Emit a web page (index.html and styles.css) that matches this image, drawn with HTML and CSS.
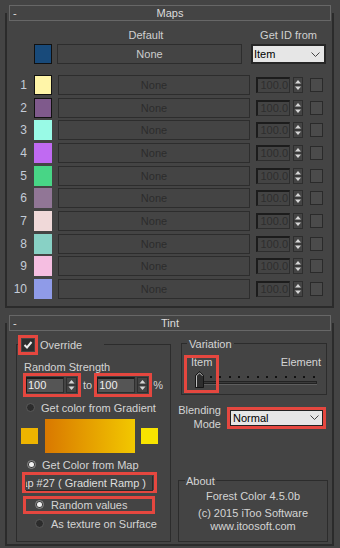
FILE: index.html
```html
<!DOCTYPE html>
<html lang="en">
<head>
    <meta charset="UTF-8">
    <meta name="viewport" content="width=device-width, initial-scale=1.0">
    <title>Forest Color</title>
    <link rel="stylesheet" href="styles.css">
</head>
<body>
    <div class="panel">

        <!-- Maps rollout -->
        <div class="rollout">
            <div class="rollout-title"><span class="collapse">-</span><span class="title-text">Maps</span><span></span></div>
            <div class="maps">
                <div class="maps-head">
                    <span class="head-default">Default</span>
                    <span class="head-id">Get ID from</span>
                </div>
                <div class="default-row">
                    <span class="swatch framed sw-default"></span>
                    <div class="map-btn default-btn">None</div>
                    <div class="dropdown id-drop">
                        <span>Item</span>
                        <svg width="9" height="5" viewBox="0 0 9 5"><polyline points="0.5,0.5 4.5,4.5 8.5,0.5" fill="none" stroke="#444" stroke-width="1"/></svg>
                    </div>
                </div>
                <div class="map-rows">
                    <div class="map-row">
                        <span class="num">1</span><span class="swatch framed sw-1"></span>
                        <div class="map-btn">None</div>
                        <div class="spinner"><span class="spin-field">100.0</span><span class="spin-arrows"><svg width="8" height="14" viewBox="0 0 8 14"><polygon points="1,5.5 4,2 7,5.5" fill="#d6d6d6"/><rect x="0" y="6.5" width="8" height="1" fill="#2e2e2e"/><polygon points="1,8.5 4,12 7,8.5" fill="#d6d6d6"/></svg></span></div>
                        <span class="check"></span>
                    </div>
                    <div class="map-row">
                        <span class="num">2</span><span class="swatch framed sw-2"></span>
                        <div class="map-btn">None</div>
                        <div class="spinner"><span class="spin-field">100.0</span><span class="spin-arrows"><svg width="8" height="14" viewBox="0 0 8 14"><polygon points="1,5.5 4,2 7,5.5" fill="#d6d6d6"/><rect x="0" y="6.5" width="8" height="1" fill="#2e2e2e"/><polygon points="1,8.5 4,12 7,8.5" fill="#d6d6d6"/></svg></span></div>
                        <span class="check"></span>
                    </div>
                    <div class="map-row">
                        <span class="num">3</span><span class="swatch sw-3"></span>
                        <div class="map-btn">None</div>
                        <div class="spinner"><span class="spin-field">100.0</span><span class="spin-arrows"><svg width="8" height="14" viewBox="0 0 8 14"><polygon points="1,5.5 4,2 7,5.5" fill="#d6d6d6"/><rect x="0" y="6.5" width="8" height="1" fill="#2e2e2e"/><polygon points="1,8.5 4,12 7,8.5" fill="#d6d6d6"/></svg></span></div>
                        <span class="check"></span>
                    </div>
                    <div class="map-row">
                        <span class="num">4</span><span class="swatch sw-4"></span>
                        <div class="map-btn">None</div>
                        <div class="spinner"><span class="spin-field">100.0</span><span class="spin-arrows"><svg width="8" height="14" viewBox="0 0 8 14"><polygon points="1,5.5 4,2 7,5.5" fill="#d6d6d6"/><rect x="0" y="6.5" width="8" height="1" fill="#2e2e2e"/><polygon points="1,8.5 4,12 7,8.5" fill="#d6d6d6"/></svg></span></div>
                        <span class="check"></span>
                    </div>
                    <div class="map-row">
                        <span class="num">5</span><span class="swatch sw-5"></span>
                        <div class="map-btn">None</div>
                        <div class="spinner"><span class="spin-field">100.0</span><span class="spin-arrows"><svg width="8" height="14" viewBox="0 0 8 14"><polygon points="1,5.5 4,2 7,5.5" fill="#d6d6d6"/><rect x="0" y="6.5" width="8" height="1" fill="#2e2e2e"/><polygon points="1,8.5 4,12 7,8.5" fill="#d6d6d6"/></svg></span></div>
                        <span class="check"></span>
                    </div>
                    <div class="map-row">
                        <span class="num">6</span><span class="swatch sw-6"></span>
                        <div class="map-btn">None</div>
                        <div class="spinner"><span class="spin-field">100.0</span><span class="spin-arrows"><svg width="8" height="14" viewBox="0 0 8 14"><polygon points="1,5.5 4,2 7,5.5" fill="#d6d6d6"/><rect x="0" y="6.5" width="8" height="1" fill="#2e2e2e"/><polygon points="1,8.5 4,12 7,8.5" fill="#d6d6d6"/></svg></span></div>
                        <span class="check"></span>
                    </div>
                    <div class="map-row">
                        <span class="num">7</span><span class="swatch sw-7"></span>
                        <div class="map-btn">None</div>
                        <div class="spinner"><span class="spin-field">100.0</span><span class="spin-arrows"><svg width="8" height="14" viewBox="0 0 8 14"><polygon points="1,5.5 4,2 7,5.5" fill="#d6d6d6"/><rect x="0" y="6.5" width="8" height="1" fill="#2e2e2e"/><polygon points="1,8.5 4,12 7,8.5" fill="#d6d6d6"/></svg></span></div>
                        <span class="check"></span>
                    </div>
                    <div class="map-row">
                        <span class="num">8</span><span class="swatch sw-8"></span>
                        <div class="map-btn">None</div>
                        <div class="spinner"><span class="spin-field">100.0</span><span class="spin-arrows"><svg width="8" height="14" viewBox="0 0 8 14"><polygon points="1,5.5 4,2 7,5.5" fill="#d6d6d6"/><rect x="0" y="6.5" width="8" height="1" fill="#2e2e2e"/><polygon points="1,8.5 4,12 7,8.5" fill="#d6d6d6"/></svg></span></div>
                        <span class="check"></span>
                    </div>
                    <div class="map-row">
                        <span class="num">9</span><span class="swatch sw-9"></span>
                        <div class="map-btn">None</div>
                        <div class="spinner"><span class="spin-field">100.0</span><span class="spin-arrows"><svg width="8" height="14" viewBox="0 0 8 14"><polygon points="1,5.5 4,2 7,5.5" fill="#d6d6d6"/><rect x="0" y="6.5" width="8" height="1" fill="#2e2e2e"/><polygon points="1,8.5 4,12 7,8.5" fill="#d6d6d6"/></svg></span></div>
                        <span class="check"></span>
                    </div>
                    <div class="map-row">
                        <span class="num">10</span><span class="swatch sw-10"></span>
                        <div class="map-btn">None</div>
                        <div class="spinner"><span class="spin-field">100.0</span><span class="spin-arrows"><svg width="8" height="14" viewBox="0 0 8 14"><polygon points="1,5.5 4,2 7,5.5" fill="#d6d6d6"/><rect x="0" y="6.5" width="8" height="1" fill="#2e2e2e"/><polygon points="1,8.5 4,12 7,8.5" fill="#d6d6d6"/></svg></span></div>
                        <span class="check"></span>
                    </div>
                </div>
            </div>
        </div>

        <!-- Tint rollout -->
        <div class="rollout tint-rollout">
            <div class="rollout-title"><span class="collapse">-</span><span class="title-text">Tint</span><span></span></div>
            <div class="tint">
                <fieldset class="group override-group">
                    <legend class="override-legend">
                        <span class="hl hl-check"><span class="checkbox on"><svg width="12" height="12" viewBox="0 0 12 12"><polyline points="2.5,6 5,8.5 9.5,3" fill="none" stroke="#ececec" stroke-width="2"/></svg></span></span>
                        <span class="override-text">Override</span>
                    </legend>
                    <div class="ovr-body">
                        <div class="rs-label">Random Strength</div>
                        <div class="rs-row">
                            <div class="hl hl-spin">
                                <span class="spin-field on">100</span>
                                <span class="spin-arrows big"><svg width="9" height="14" viewBox="0 0 9 14"><polygon points="1.5,5.5 4.5,2 7.5,5.5" fill="#d6d6d6"/><rect x="0" y="6.5" width="9" height="1" fill="#2e2e2e"/><polygon points="1.5,8.5 4.5,12 7.5,8.5" fill="#d6d6d6"/></svg></span>
                            </div>
                            <span class="to">to</span>
                            <div class="hl hl-spin">
                                <span class="spin-field on">100</span>
                                <span class="spin-arrows big"><svg width="9" height="14" viewBox="0 0 9 14"><polygon points="1.5,5.5 4.5,2 7.5,5.5" fill="#d6d6d6"/><rect x="0" y="6.5" width="9" height="1" fill="#2e2e2e"/><polygon points="1.5,8.5 4.5,12 7.5,8.5" fill="#d6d6d6"/></svg></span>
                            </div>
                            <span class="pct">%</span>
                        </div>
                        <div class="radio-line grad-radio"><span class="radio"></span>Get color from Gradient</div>
                        <div class="grad-row">
                            <span class="grad-swatch grad-start"></span>
                            <span class="gradient"></span>
                            <span class="grad-swatch grad-end"></span>
                        </div>
                        <div class="radio-line map-radio"><span class="radio on"></span>Get Color from Map</div>
                        <div class="hl hl-map"><div class="tex-btn">Map #27 ( Gradient Ramp )</div></div>
                        <div class="hl hl-random"><div class="radio-line"><span class="radio on"></span>Random values</div></div>
                        <div class="radio-line surface-radio"><span class="radio"></span>As texture on Surface</div>
                    </div>
                </fieldset>

                <div class="right-col">
                    <fieldset class="group var-group">
                        <legend class="group-legend">Variation</legend>
                        <div class="var-body">
                            <div class="var-labels"><span>Item</span><span>Element</span></div>
                            <svg class="slider" width="125" height="18" viewBox="0 0 125 18">
                                <g fill="#111">
                                    <rect x="15" y="6" width="2" height="2"/><rect x="24" y="6" width="2" height="2"/>
                                    <rect x="34" y="6" width="2" height="2"/><rect x="43" y="6" width="2" height="2"/>
                                    <rect x="52" y="6" width="2" height="2"/><rect x="62" y="6" width="2" height="2"/>
                                    <rect x="71" y="6" width="2" height="2"/><rect x="80" y="6" width="2" height="2"/>
                                    <rect x="90" y="6" width="2" height="2"/><rect x="99" y="6" width="2" height="2"/>
                                    <rect x="108" y="6" width="2" height="2"/><rect x="118" y="6" width="2" height="2"/>
                                </g>
                                <rect x="8.5" y="11.5" width="113" height="2" fill="#3a3a3a" stroke="#222"/>
                                <line x1="9" y1="14.5" x2="122" y2="14.5" stroke="#5e5e5e"/>
                                <polygon points="0.5,17.5 8.5,17.5 8.5,5.5 4.5,1.5 0.5,5.5" fill="#2e2e2e" stroke="#151515"/>
                                <polyline points="1.5,17 1.5,5.8 4.5,2.8 7.5,5.8" fill="none" stroke="#bdbdbd"/>
                            </svg>
                            <span class="hl hl-slider"></span>
                        </div>
                    </fieldset>

                    <div class="blend-row">
                        <div class="blend-label">Blending<br>Mode</div>
                        <div class="hl hl-blend">
                            <div class="dropdown blend-drop">
                                <span>Normal</span>
                                <svg width="9" height="5" viewBox="0 0 9 5"><polyline points="0.5,0.5 4.5,4.5 8.5,0.5" fill="none" stroke="#444" stroke-width="1"/></svg>
                            </div>
                        </div>
                    </div>

                    <fieldset class="group about-group">
                        <legend class="group-legend about-legend">About</legend>
                        <div class="about-body">
                            <div class="about-version">Forest Color 4.5.0b</div>
                            <div class="about-line">(c) 2015 iToo Software</div>
                            <div class="about-line">www.itoosoft.com</div>
                        </div>
                    </fieldset>
                </div>
            </div>
        </div>
    </div>
</body>
</html>
```

FILE: styles.css
```css
body {
    margin: 0;
    background-color: #444444;
    font-family: "Liberation Sans", Arial, sans-serif;
    font-size: 11px;
    line-height: 14px;
    color: #d4d4d4;
}

.panel {
    width: 340px;
    height: 548px;
    padding: 0 6px 0 5px;
    box-sizing: border-box;
    overflow: hidden;
}

/* rollouts */
.rollout {
    display: flow-root;
    margin-top: 13px;
    border: 2px solid #2b2b2b;
    border-top: none;
}

.tint-rollout {
    margin-top: 15px;
}

.rollout-title {
    display: grid;
    grid-template-columns: 1fr auto 1fr;
    height: 16px;
    box-sizing: border-box;
    margin: -8px 1px 0 2px;
    border: 1px solid #676767;
    color: #dcdcdc;
}

.collapse {
    padding-left: 3px;
}

/* maps */
.maps {
    padding-bottom: 7px;
}

.maps-head {
    display: flex;
    margin-top: 7px;
    color: #d0d0d0;
}

.head-default {
    width: 185px;
    margin-left: 50px;
    padding-right: 7px;
    box-sizing: border-box;
    text-align: center;
}

.head-id {
    width: 75px;
    margin-left: 9px;
    text-align: center;
}

.default-row {
    display: flex;
    align-items: center;
    height: 20px;
    margin-top: 2px;
}

.default-row .swatch {
    margin-left: 27px;
}

.map-rows {
    display: flex;
    flex-direction: column;
    gap: 2.667px;
    margin-top: 11px;
}

.map-row {
    display: flex;
    align-items: center;
    height: 20px;
}

.num {
    width: 20px;
    text-align: right;
    color: #c4ccd8;
    font-size: 12px;
}

.swatch {
    width: 18px;
    height: 20px;
    margin-left: 7px;
    box-sizing: border-box;
}

.swatch.framed {
    border: 1px solid #111;
}

.sw-default { background: #184a7a; }
.sw-1 { background: #fff5a8; }
.sw-2 { background: #7f5a8c; }
.sw-3 { background: #99fae6; }
.sw-4 { background: #c06af2; }
.sw-5 { background: #48d586; }
.sw-6 { background: #917696; }
.sw-7 { background: #f0d9d9; }
.sw-8 { background: #88d1c5; }
.sw-9 { background: #f5bee1; }
.sw-10 { background: #8f9be8; }

.map-btn {
    width: 192px;
    height: 20px;
    margin-left: 6px;
    box-sizing: border-box;
    border: 1px solid #2d2d2d;
    text-align: center;
    line-height: 18px;
    color: #2c2c2c;
}

.default-btn {
    width: 185px;
    margin-left: 5px;
    color: #cdcdcd;
}

.dropdown {
    display: flex;
    align-items: center;
    justify-content: space-between;
    box-sizing: border-box;
    background: #e6e6e6;
    color: #000;
}

.id-drop {
    width: 75px;
    height: 20px;
    margin-left: 9px;
    border: 2px solid #262626;
    padding: 0 4px 0 1px;
}

.spinner {
    display: flex;
    gap: 3px;
    margin-left: 6px;
}

.spin-field {
    width: 34px;
    height: 16px;
    box-sizing: border-box;
    border-top: 2px solid #1c1c1c;
    border-left: 2px solid #1c1c1c;
    border-right: 1px solid #2e2e2e;
    border-bottom: 1px solid #2e2e2e;
    padding-right: 1px;
    text-align: right;
    line-height: 13px;
    color: #2e2e2e;
}

.spin-arrows {
    display: flex;
    width: 10px;
    height: 16px;
    box-sizing: border-box;
    border: 1px solid #2e2e2e;
}

.check {
    width: 13px;
    height: 14px;
    margin-left: 7px;
    box-sizing: border-box;
    border: 1px solid #2a2a2a;
    background: #4b4b4b;
}

/* tint */
.tint {
    display: flex;
    align-items: flex-start;
    padding: 0 4px 2px 9px;
}

.group {
    margin: 0;
    padding: 0;
    min-width: 0;
    box-sizing: border-box;
    border: 1px solid #2c2c2c;
}

.override-group {
    width: 155px;
    margin-top: 4px;
}

.override-legend {
    display: flex;
    align-items: center;
    margin-left: 1px;
    padding: 0 22px 0 0;
}

.hl {
    box-sizing: border-box;
    border: 3px solid #e5473f;
}

.hl-check {
    display: flex;
    padding: 1px;
}

.checkbox {
    display: flex;
    width: 12px;
    height: 12px;
    background: #2e2e2e;
}

.override-text {
    margin-left: 2px;
}

.ovr-body {
    padding-bottom: 10px;
}

.rs-label {
    margin-top: 5px;
    padding-left: 7px;
}

.rs-row {
    display: flex;
    align-items: center;
    margin: -1px 0 0 6px;
}

.hl-spin {
    display: flex;
    gap: 2px;
    width: 58px;
    height: 24px;
    padding: 1px 1px 1px 0;
}

.spin-field.on {
    width: 38px;
    border-left-width: 1px;
    padding: 0 0 0 1px;
    text-align: left;
    background: #555;
    color: #f0f0f0;
}

.spin-arrows.big {
    width: 11px;
}

.to {
    margin: 0 2px;
}

.pct {
    margin-left: 1px;
}

.radio-line {
    display: flex;
    align-items: center;
    gap: 6px;
}

.radio {
    display: flex;
    align-items: center;
    justify-content: center;
    width: 9px;
    height: 9px;
    box-sizing: border-box;
    border-radius: 50%;
    border: 1px solid #5a5a5a;
    background: #2c2c2c;
}

.radio.on {
    border-color: #8c8c8c;
    background: #3a3a3a;
}

.radio.on::after {
    content: "";
    width: 5px;
    height: 5px;
    border-radius: 50%;
    background: #f2f2f2;
}

.grad-radio {
    margin-top: 4px;
    padding-left: 9px;
}

.grad-row {
    display: flex;
    align-items: center;
    margin-top: 4px;
    padding-left: 4px;
}

.grad-swatch {
    width: 17px;
    height: 16px;
}

.grad-start {
    background: #eeb400;
}

.grad-end {
    background: #f8e400;
}

.gradient {
    width: 90px;
    height: 34px;
    margin: 0 6px 0 7px;
    background: linear-gradient(to right, #d97800, #f2c800);
}

.map-radio {
    margin-top: 5px;
    padding-left: 10px;
}

.hl-map {
    width: 135px;
    height: 21px;
    margin-left: 5px;
    padding: 1px 1px 0 1px;
}

.tex-btn {
    display: flex;
    justify-content: flex-end;
    height: 14px;
    overflow: hidden;
    white-space: pre;
    padding-right: 6px;
    border-bottom: 1px solid #2a2a2a;
    border-right: 1px solid #2a2a2a;
    line-height: 14px;
    color: #dedede;
}

.hl-random {
    width: 132px;
    height: 18px;
    margin: 3px 0 0 6px;
    padding-left: 9px;
    line-height: 12px;
}

.hl-random .radio-line {
    gap: 7px;
}

.surface-radio {
    margin-top: 3px;
    padding-left: 18px;
    gap: 7px;
}

/* right column */
.right-col {
    width: 150px;
    margin-left: 7px;
}

.var-group {
    width: 146px;
    margin: 6px 0 0 3px;
}

.group-legend {
    margin-left: 5px;
    padding: 0 2px;
}

.var-body {
    position: relative;
    padding: 4px 5px 6px 9px;
}

.var-labels {
    display: flex;
    justify-content: space-between;
}

.slider {
    display: block;
    margin: 1px 0 0 4px;
}

.hl-slider {
    position: absolute;
    left: 2px;
    top: 4px;
    width: 35px;
    height: 38px;
}

.blend-row {
    display: flex;
    align-items: flex-start;
    margin-top: 8px;
}

.blend-label {
    width: 43px;
    text-align: right;
}

.hl-blend {
    width: 99px;
    height: 22px;
    margin: 4px 0 0 6px;
}

.blend-drop {
    height: 16px;
    border: 1px solid #222;
    padding: 0 3px 0 2px;
}

.about-group {
    width: 150px;
    margin-top: 43px;
}

.about-legend {
    margin-left: 6px;
    padding: 0 1px;
}

.about-body {
    padding: 1px 0 8px;
    text-align: center;
}

.about-version {
    margin-bottom: 4px;
}

.about-line {
    line-height: 13px;
}
```
